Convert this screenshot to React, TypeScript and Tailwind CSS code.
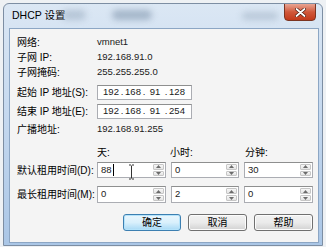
import React from "react";

const Arrow = ({ up }: { up?: boolean }) => (
  <svg width="5" height="3" viewBox="0 0 5 3" className="block">
    <path d={up ? "M0 3 L2.5 0 L5 3 Z" : "M0 0 L2.5 3 L5 0 Z"} fill="#6b6b6b" />
  </svg>
);

const SpinBox = ({ value, caret, width }: { value: string; caret?: boolean; width: string }) => (
  <div className={`${width} h-full flex border border-[#abadb3] border-t-[#8e8f8f] bg-white`}>
    <div className="flex-1 flex items-center pl-[3px] text-[9.5px] text-[#1a1a1a]">
      {value}
      {caret && <span className="w-px h-[12px] bg-black ml-px" />}
    </div>
    <div className="w-[13px] flex flex-col p-px gap-px">
      <div className="flex-1 flex items-center justify-center bg-gradient-to-b from-[#f7f7f7] to-[#e4e4e4] border border-[#c6c6c6] rounded-[1px]">
        <Arrow up />
      </div>
      <div className="flex-1 flex items-center justify-center bg-gradient-to-b from-[#f7f7f7] to-[#e4e4e4] border border-[#c6c6c6] rounded-[1px]">
        <Arrow />
      </div>
    </div>
  </div>
);

const IpBox = ({ parts }: { parts: string[] }) => (
  <div className="w-[95px] h-full flex items-center pl-[4px] bg-white border border-[#abadb3] border-t-[#8e8f8f] text-[9.5px] text-[#1a1a1a]">
    {parts.map((p, i) => (
      <React.Fragment key={i}>
        {i > 0 && <span className="w-[4px] text-center">.</span>}
        <span className="w-[18px] text-center">{p}</span>
      </React.Fragment>
    ))}
  </div>
);

const Button = ({ label, primary }: { label: string; primary?: boolean }) => (
  <div
    className={
      primary
        ? "w-[58px] h-full flex items-center justify-center rounded-[3px] border border-[#3c7fb1] bg-gradient-to-b from-[#eaf6fd] via-[#d9f0fc] to-[#a7d9f5] shadow-[inset_0_0_0_1px_#b4e3fb]"
        : "w-[59px] h-full flex items-center justify-center rounded-[3px] border border-[#707070] bg-gradient-to-b from-[#f2f2f2] via-[#ebebeb] to-[#d2d2d2] shadow-[inset_0_0_0_1px_#fcfcfc]"
    }
  >
    {label}
  </div>
);

const Row = ({ label, children, className }: { label: string; children?: React.ReactNode; className: string }) => (
  <div className={`flex items-center ${className}`}>
    <div className="w-[80px] shrink-0">{label}</div>
    {children}
  </div>
);

export default function App() {
  return (
    <div className="w-[326px] h-[247px] bg-[#eef1f4] pt-[3px] pl-[3px] font-['Liberation_Sans','Noto_Sans_CJK_SC',sans-serif] text-[10px] text-black overflow-hidden">
      <div className="relative w-[320px] h-[243px] rounded-t-[6px] border border-[#7d8ea3] bg-gradient-to-b from-[#dbe7f4] via-[#c3d7ee] to-[#aac6e6] flex flex-col overflow-hidden">
        {/* aero blur blobs */}
        <div className="absolute left-[58px] top-[6px] w-[24px] h-[10px] rounded-full bg-[#9fb1c4] blur-[3px] opacity-60" />
        <div className="absolute left-[108px] top-[6px] w-[40px] h-[10px] rounded-full bg-[#8297ae] blur-[3px] opacity-60" />
        <div className="absolute left-[238px] top-[8px] w-[36px] h-[8px] rounded-full bg-[#a5b6c8] blur-[3px] opacity-60" />

        <div className="h-[24px] flex items-center pl-[8px] text-[10.5px] text-black shrink-0">DHCP 设置</div>

        <div className="absolute left-[280px] top-[-1px] w-[32px] h-[18px] rounded-b-[4px] border border-[#7a3422] bg-gradient-to-b from-[#e8a493] via-[#d0573a] to-[#c2391a] flex items-center justify-center">
          <svg width="11" height="9" viewBox="0 0 11 9">
            <path d="M1.5 1 L9.5 8 M9.5 1 L1.5 8" stroke="#4a1a10" strokeWidth="3.2" strokeLinecap="round" />
            <path d="M1.5 1 L9.5 8 M9.5 1 L1.5 8" stroke="#ffffff" strokeWidth="1.8" strokeLinecap="round" />
          </svg>
        </div>

        <div className="ml-[5px] w-[310px] h-[215px] border border-[#8ca6c4] bg-[#f4f4f4] flex flex-col pt-[6px] pl-[7px] pr-[5px] shrink-0">
          <Row label="网络:" className="h-[15px]">
            <span className="text-[9.5px] text-[#1a1a1a]">vmnet1</span>
          </Row>
          <Row label="子网 IP:" className="h-[15px]">
            <span className="text-[9.5px] text-[#1a1a1a]">192.168.91.0</span>
          </Row>
          <Row label="子网掩码:" className="h-[15px]">
            <span className="text-[9.5px] text-[#1a1a1a]">255.255.255.0</span>
          </Row>
          <Row label="起始 IP 地址(S):" className="h-[15px] mt-[5px]">
            <IpBox parts={["192", "168", "91", "128"]} />
          </Row>
          <Row label="结束 IP 地址(E):" className="h-[15px] mt-[4px]">
            <IpBox parts={["192", "168", "91", "254"]} />
          </Row>
          <Row label="广播地址:" className="h-[14px] mt-[3px]">
            <span className="text-[9.5px] text-[#1a1a1a]">192.168.91.255</span>
          </Row>
          <Row label="" className="h-[14px] mt-[9px]">
            <div className="w-[73px]">天:</div>
            <div className="w-[75px]">小时:</div>
            <div>分钟:</div>
          </Row>
          <Row label="默认租用时间(D):" className="h-[16px] mt-[3px]">
            <div className="relative flex gap-[5px] h-full">
              <SpinBox value="88" caret width="w-[69px]" />
              <SpinBox value="0" width="w-[68px]" />
              <SpinBox value="30" width="w-[69px]" />
              <svg className="absolute left-[31px] top-[2px]" width="7" height="16" viewBox="0 0 7 16">
                <path d="M1 1 H3 M4 1 H6 M3.5 1.5 V14.5 M1 15 H3 M4 15 H6" stroke="#333" strokeWidth="1" fill="none" />
              </svg>
            </div>
          </Row>
          <Row label="最长租用时间(M):" className="h-[17px] mt-[8px]">
            <div className="flex gap-[5px] h-full">
              <SpinBox value="0" width="w-[69px]" />
              <SpinBox value="2" width="w-[68px]" />
              <SpinBox value="0" width="w-[69px]" />
            </div>
          </Row>
          <div className="h-[17px] mt-[11px] flex justify-end gap-[7px] pr-[0px]">
            <Button label="确定" primary />
            <Button label="取消" />
            <Button label="帮助" />
          </div>
        </div>
      </div>
    </div>
  );
}
